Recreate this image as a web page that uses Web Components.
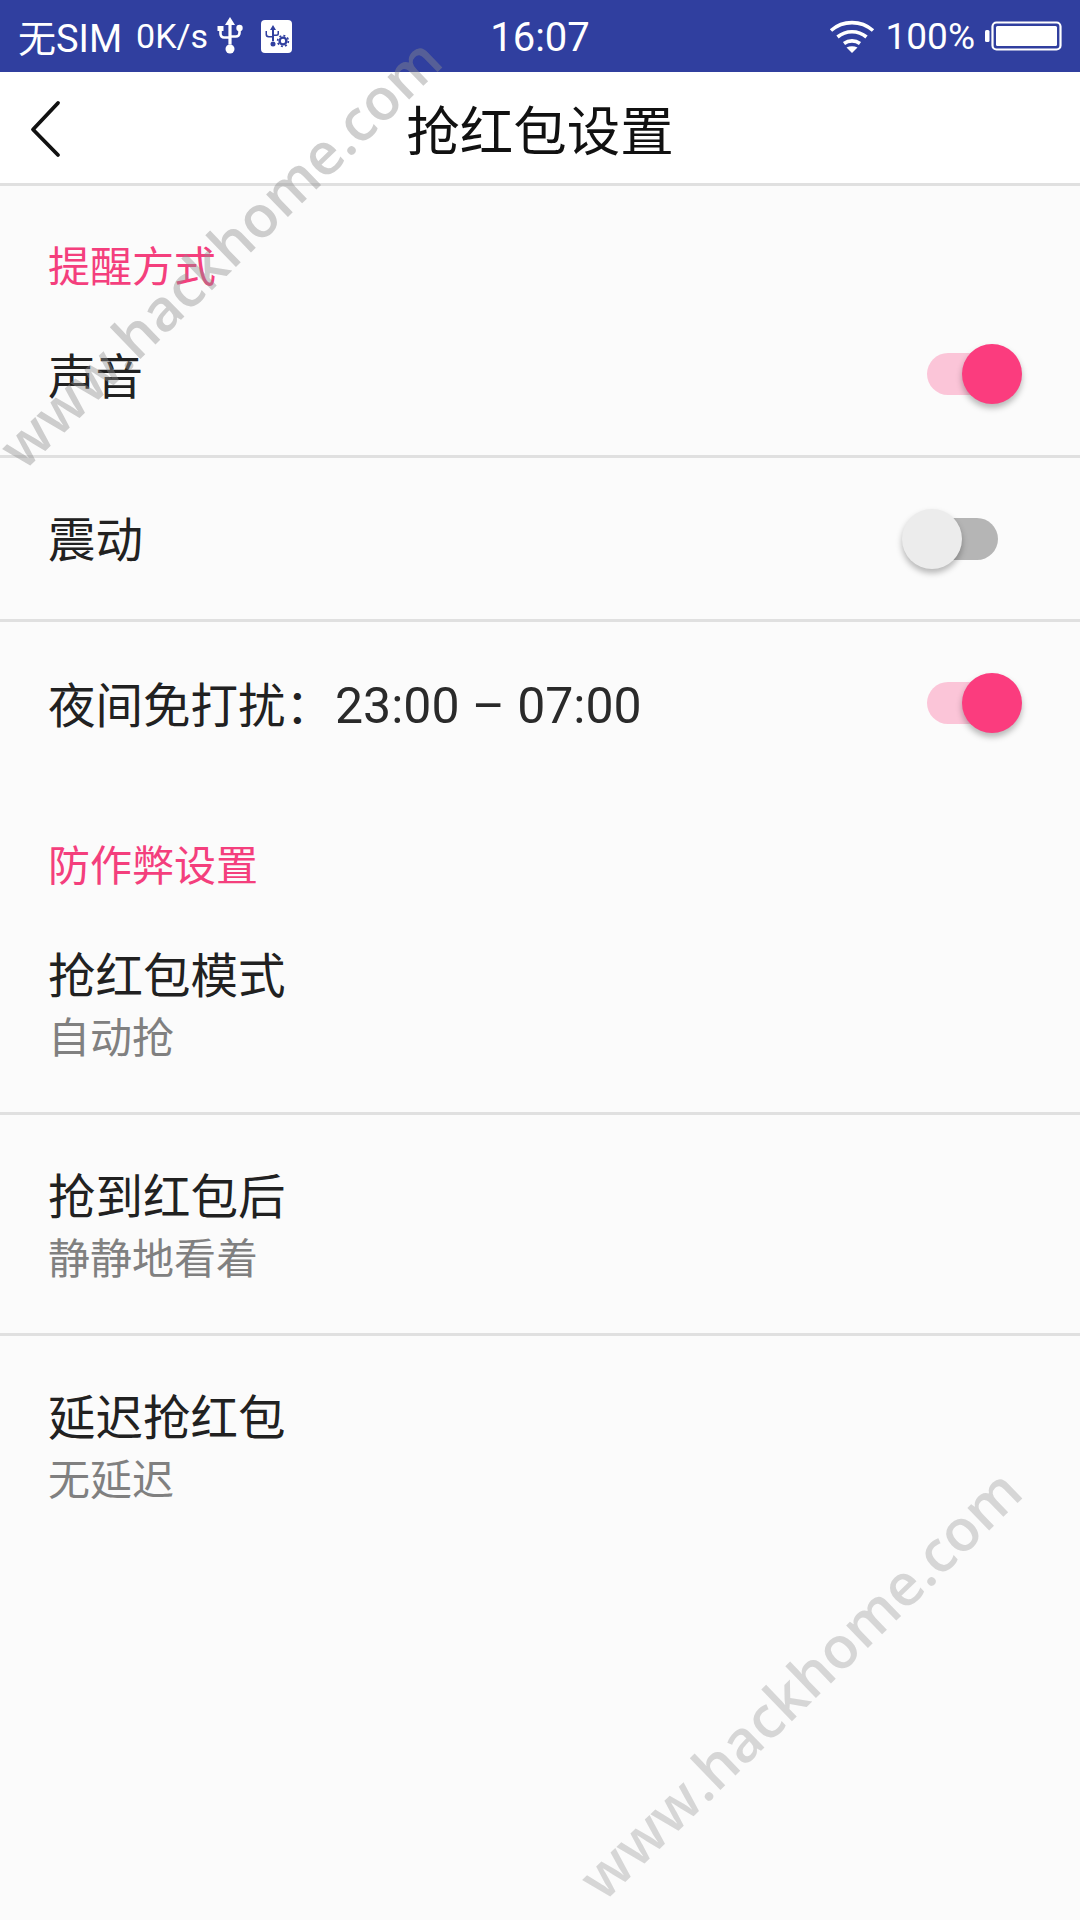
<!DOCTYPE html>
<html lang="zh-CN"><head><meta charset="utf-8">
<style>
html,body{margin:0;padding:0;background:#fbfbfb}
body{width:1080px;height:1920px;overflow:hidden;font-family:"Noto Sans CJK SC","Noto Sans",sans-serif}
.t{font-family:"Roboto",sans-serif;font-weight:400;font-size:50px;color:#2a2a2a;margin-left:2px}
</style></head>
<body>
<app-screen>
  <status-bar></status-bar>
  <tool-bar>抢红包设置</tool-bar>
  <hr-line></hr-line>
  <section-label style="--h:106px;--pt:48px">提醒方式</section-label>
  <switch-row on style="--h:163px">声音</switch-row>
  <hr-line></hr-line>
  <switch-row style="--h:161px;--tb:4px">震动</switch-row>
  <hr-line></hr-line>
  <switch-row on style="--h:162px"><span>夜间免打扰：<span class="t">23:00 – 07:00</span></span></switch-row>
  <section-label style="--h:110px;--pt:47px">防作弊设置</section-label>
  <info-row title="抢红包模式" sub="自动抢"></info-row>
  <hr-line></hr-line>
  <info-row title="抢到红包后" sub="静静地看着"></info-row>
  <hr-line></hr-line>
  <info-row title="延迟抢红包" sub="无延迟"></info-row>
  <water-mark style="--cx:219px;--cy:252px;--c:rgba(140,140,140,.42)"></water-mark>
  <water-mark style="--cx:799px;--cy:1683px;--c:rgba(140,140,140,.33)"></water-mark>
</app-screen>
<script>
function def(name, css, html){
  customElements.define(name, class extends HTMLElement{
    connectedCallback(){
      if(this.shadowRoot) return;
      const r=this.attachShadow({mode:'open'});
      r.innerHTML='<style>'+css+'</style>'+(typeof html==='function'?html(this):html);
    }
  });
}
const CJK='"Noto Sans CJK SC","Noto Sans",sans-serif';
def('app-screen',':host{display:flex;flex-direction:column;position:relative;width:1080px;height:1920px;overflow:hidden;background:#fbfbfb}','<slot></slot>');
def('status-bar',`:host{display:flex;align-items:center;height:72px;background:#303f9f;color:#fff;font-family:"Roboto",${CJK};flex:none}
.l,.r{display:flex;align-items:center;flex:1}
.r{justify-content:flex-end}
.sim{font-size:38px;margin-left:18px;margin-top:-1px}
.sp{font-size:34px;margin-left:14px}
.time{font-size:40px;width:200px;text-align:center;padding-top:3px}
.pct{font-size:37px;margin-left:11px}
svg{display:block;flex:none}`,`
<div class="l"><span class="sim">无SIM</span><span class="sp">0K/s</span>
<svg style="margin-left:9px" width="26" height="40" viewBox="0 0 26 40"><path d="M13 1l5 8h-3.400v19.500h-3.200V9H8z" fill="#fff"/><circle cx="13" cy="33" r="4.500" fill="#fff"/><path d="M3.500 13v5a3.500 3.500 0 0 0 3.500 3.500h6M22.500 13v4a3.500 3.500 0 0 1-3.500 3.500h-6" stroke="#fff" stroke-width="2.600" fill="none"/><rect x="0.500" y="10" width="6" height="5" fill="#fff"/><circle cx="22.500" cy="12" r="3.200" fill="#fff"/></svg>
<svg style="margin-left:18px" width="31" height="33" viewBox="0 0 31 33"><rect width="31" height="33" rx="4" fill="#fff"/><g fill="#303f9f"><path d="M12 5l3 5h-2v11h-2V10H9z"/><circle cx="12" cy="24" r="2.500"/><path d="M6 11v3a2 2 0 0 0 2 2h3v1.500H7.500A3 3 0 0 1 4.500 14.500V11zM18 11v2.500a2.500 2.500 0 0 1-2.500 2.500H13v-1.500h2.500a1 1 0 0 0 1-1V11z"/></g><circle cx="22" cy="21" r="3.400" fill="none" stroke="#303f9f" stroke-width="2.400"/><circle cx="22" cy="21" r="5.400" fill="none" stroke="#303f9f" stroke-width="1.600" stroke-dasharray="2 2.200"/></svg></div>
<div class="time">16:07</div>
<div class="r"><svg width="46" height="34" viewBox="0 0 46 34"><g fill="none" stroke="#fff" stroke-width="3.600"><path d="M2 11.500C14 1 32 1 44 11.500"/><path d="M8.500 18C17 11 29 11 37.500 18"/><path d="M15 24.500c4.800-3.500 11.200-3.500 16 0"/></g><path d="M17.500 28.500c3.400-1.700 7.600-1.700 11 0L23 34z" fill="#fff"/></svg>
<span class="pct">100%</span>
<svg style="margin:0 18px 0 10px" width="77" height="30" viewBox="0 0 77 30"><rect x="0" y="9" width="4.500" height="12" rx="1.500" fill="#fff"/><rect x="7.500" y="1.500" width="68" height="27" rx="4" fill="none" stroke="#fff" stroke-width="2.200"/><rect x="11" y="5" width="61" height="20" rx="1.500" fill="#fff"/></svg></div>`);
def('tool-bar',`:host{display:flex;align-items:center;justify-content:center;height:111px;background:#fff;position:relative;flex:none;font-size:53.500px;color:#111;font-family:${CJK}}
svg{position:absolute;left:29px;top:28px}`,`<svg width="34" height="58" viewBox="0 0 34 58"><path d="M29 3L4 29.500 29 55" fill="none" stroke="#111" stroke-width="3.800" stroke-linecap="round" stroke-linejoin="round"/></svg><span><slot></slot></span>`);
def('hr-line',':host{display:block;height:3px;background:#e0e0e0;flex:none}','');
def('section-label',`:host{display:flex;align-items:center;flex:none;box-sizing:border-box;height:var(--h);padding:var(--pt) 0 0 48px;font-size:42px;color:#f43f7d;font-family:${CJK}}`,'<slot></slot>');
def('switch-row',`:host{display:flex;align-items:center;justify-content:space-between;flex:none;box-sizing:border-box;height:var(--h);padding:0 0 0 48px;font-size:47.500px;color:#212121;font-family:${CJK}}
.tx{padding-bottom:var(--tb,1px)}
.sw{position:relative;width:71px;height:42px;margin-right:82px;border-radius:21px;flex:none;background:#b5b5b5}
:host([on]) .sw{background:#fbc5d8}
.th{position:absolute;top:-9px;left:-25px;width:60px;height:60px;border-radius:50%;background:#ececec;box-shadow:0 4px 6px rgba(0,0,0,.28)}
:host([on]) .th{left:35px;background:#fb3c7e}`,`<div class="tx"><slot></slot></div><div class="sw"><div class="th"></div></div>`);
def('info-row',`:host{display:flex;flex-direction:column;flex:none;box-sizing:border-box;height:218px;padding:48px 0 0 48px;font-family:${CJK}}
.a{font-size:47.500px;line-height:62px;color:#212121}
.b{font-size:42px;line-height:60px;color:#808080;margin-top:1px}`,h=>`<div class="a">${h.getAttribute('title')}</div><div class="b">${h.getAttribute('sub')}</div>`);
def('water-mark',`:host{position:absolute;left:var(--cx);top:var(--cy);width:0;height:0;pointer-events:none}
div{position:absolute;left:0;top:0;transform:translate(-50%,-50%) rotate(-44deg);white-space:nowrap;font-family:"Open Sans",sans-serif;font-size:58px;font-weight:600;color:var(--c)}`,'<div>www.hackhome.com</div>');
</script>
</body></html>
